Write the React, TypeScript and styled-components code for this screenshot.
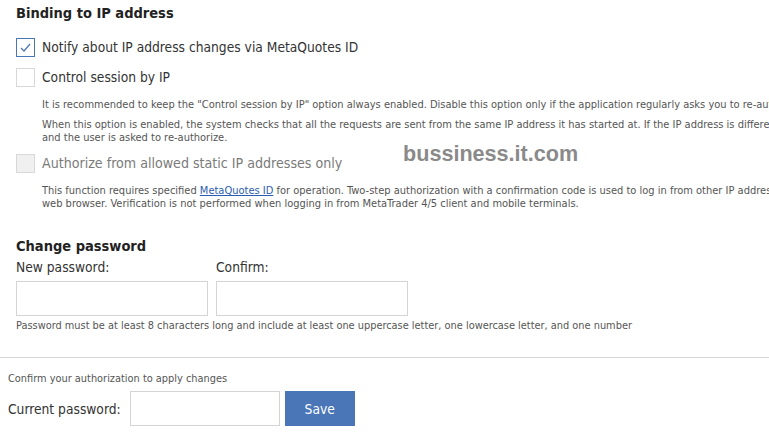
import React from 'react'
import styled, { createGlobalStyle } from 'styled-components'

const Global = createGlobalStyle`
    html, body {
        margin: 0;
        padding: 0;
        background: #fff;
        overflow: hidden;
    }
    body {
        font-family: "DejaVu Sans Condensed", "DejaVu Sans", sans-serif;
        color: #333;
    }
`

const Page = styled.div`
    position: relative;
    width: 1000px;
`

const Section = styled.section`
    padding: 0 16px;
`

const Title = styled.h2`
    margin: 0;
    padding-top: 4px;
    font-size: 14.5px;
    font-weight: bold;
    color: #222;
    line-height: 18px;
`

const OptionRow = styled.label<{ disabled?: boolean }>`
    display: flex;
    align-items: center;
    gap: 7px;
    height: 20px;
    font-size: ${p => (p.disabled ? '14.1px' : '13.7px')};
    color: ${p => (p.disabled ? '#7a7a7a' : '#333')};
`

const Box = styled.span<{ checked?: boolean; disabled?: boolean }>`
    box-sizing: border-box;
    width: 19px;
    height: 19px;
    flex: none;
    display: flex;
    align-items: center;
    justify-content: center;
    border: 1px solid ${p => (p.checked ? '#4a76b8' : '#d8d8d8')};
    background: ${p => (p.disabled ? '#f0f0f0' : '#fff')};
`

const Note = styled.p`
    margin: 0;
    padding-left: 26px;
    font-size: 11px;
    line-height: 13px;
    color: #555;
    white-space: nowrap;
    a {
        color: #2a5db0;
    }
`

const Watermark = styled.span`
    position: absolute;
    left: 403px;
    top: 141px;
    font-family: "Liberation Sans", Arial, sans-serif;
    font-weight: bold;
    font-size: 21.6px;
    color: #8a8a8a;
`

const FieldGrid = styled.div`
    display: grid;
    grid-template-columns: 192px 192px;
    column-gap: 8px;
    row-gap: 6px;
`

const Label = styled.div`
    font-size: 13.7px;
    color: #333;
    line-height: 16px;
`

const Input = styled.input<{ w?: number }>`
    box-sizing: border-box;
    width: ${p => p.w ?? 192}px;
    height: 35px;
    border: 1px solid #d4d4d4;
    outline: none;
    margin: 0;
`

const Hint = styled.div`
    font-size: 10.9px;
    color: #555;
    margin-top: 3px;
    white-space: nowrap;
`

const Divider = styled.hr`
    margin: 0;
    border: none;
    border-top: 1px solid #d8d8d8;
    width: 769px;
`

const Footer = styled.div`
    padding: 14px 8px 0;
`

const FooterNote = styled.div`
    font-size: 10.9px;
    color: #555;
    line-height: 13px;
`

const FooterRow = styled.div`
    display: flex;
    align-items: center;
    margin-top: 6px;
`

const Save = styled.button`
    margin-left: 5px;
    width: 70px;
    height: 35px;
    border: none;
    background: #4a76b8;
    color: #fff;
    font-family: inherit;
    font-size: 13.7px;
`

const Check = () => (
    <svg width="13" height="13" viewBox="0 0 13 13">
        <path d="M2 7 L5 10 L11 3" fill="none" stroke="#4a76b8" strokeWidth="1.2" />
    </svg>
)

const App = () => (
    <Page>
        <Global />
        <Section>
            <Title>Binding to IP address</Title>
            <div style={{ height: 15 }} />
            <OptionRow>
                <Box checked><Check /></Box>
                Notify about IP address changes via MetaQuotes ID
            </OptionRow>
            <div style={{ height: 10 }} />
            <OptionRow>
                <Box />
                Control session by IP
            </OptionRow>
            <div style={{ height: 11 }} />
            <Note>It is recommended to keep the "Control session by IP" option always enabled. Disable this option only if the application regularly asks you to re-authorize.</Note>
            <div style={{ height: 7 }} />
            <Note>When this option is enabled, the system checks that all the requests are sent from the same IP address it has started at. If the IP address is different, the session is terminated,</Note>
            <Note>and the user is asked to re-authorize.</Note>
            <div style={{ height: 9 }} />
            <OptionRow disabled>
                <Box disabled />
                Authorize from allowed static IP addresses only
            </OptionRow>
            <div style={{ height: 11 }} />
            <Note>This function requires specified <a href="#">MetaQuotes ID</a> for operation. Two-step authorization with a confirmation code is used to log in from other IP addresses via</Note>
            <Note>web browser. Verification is not performed when logging in from MetaTrader 4/5 client and mobile terminals.</Note>
            <div style={{ height: 23 }} />
            <Title>Change password</Title>
            <div style={{ height: 4 }} />
            <FieldGrid>
                <Label>New password:</Label>
                <Label>Confirm:</Label>
                <Input type="password" />
                <Input type="password" />
            </FieldGrid>
            <Hint>Password must be at least 8 characters long and include at least one uppercase letter, one lowercase letter, and one number</Hint>
            <div style={{ height: 25 }} />
        </Section>
        <Divider />
        <Footer>
            <FooterNote>Confirm your authorization to apply changes</FooterNote>
            <FooterRow>
                <Label style={{ marginRight: 9 }}>Current password:</Label>
                <Input type="password" w={150} />
                <Save>Save</Save>
            </FooterRow>
        </Footer>
        <Watermark>bussiness.it.com</Watermark>
    </Page>
)

export default App
